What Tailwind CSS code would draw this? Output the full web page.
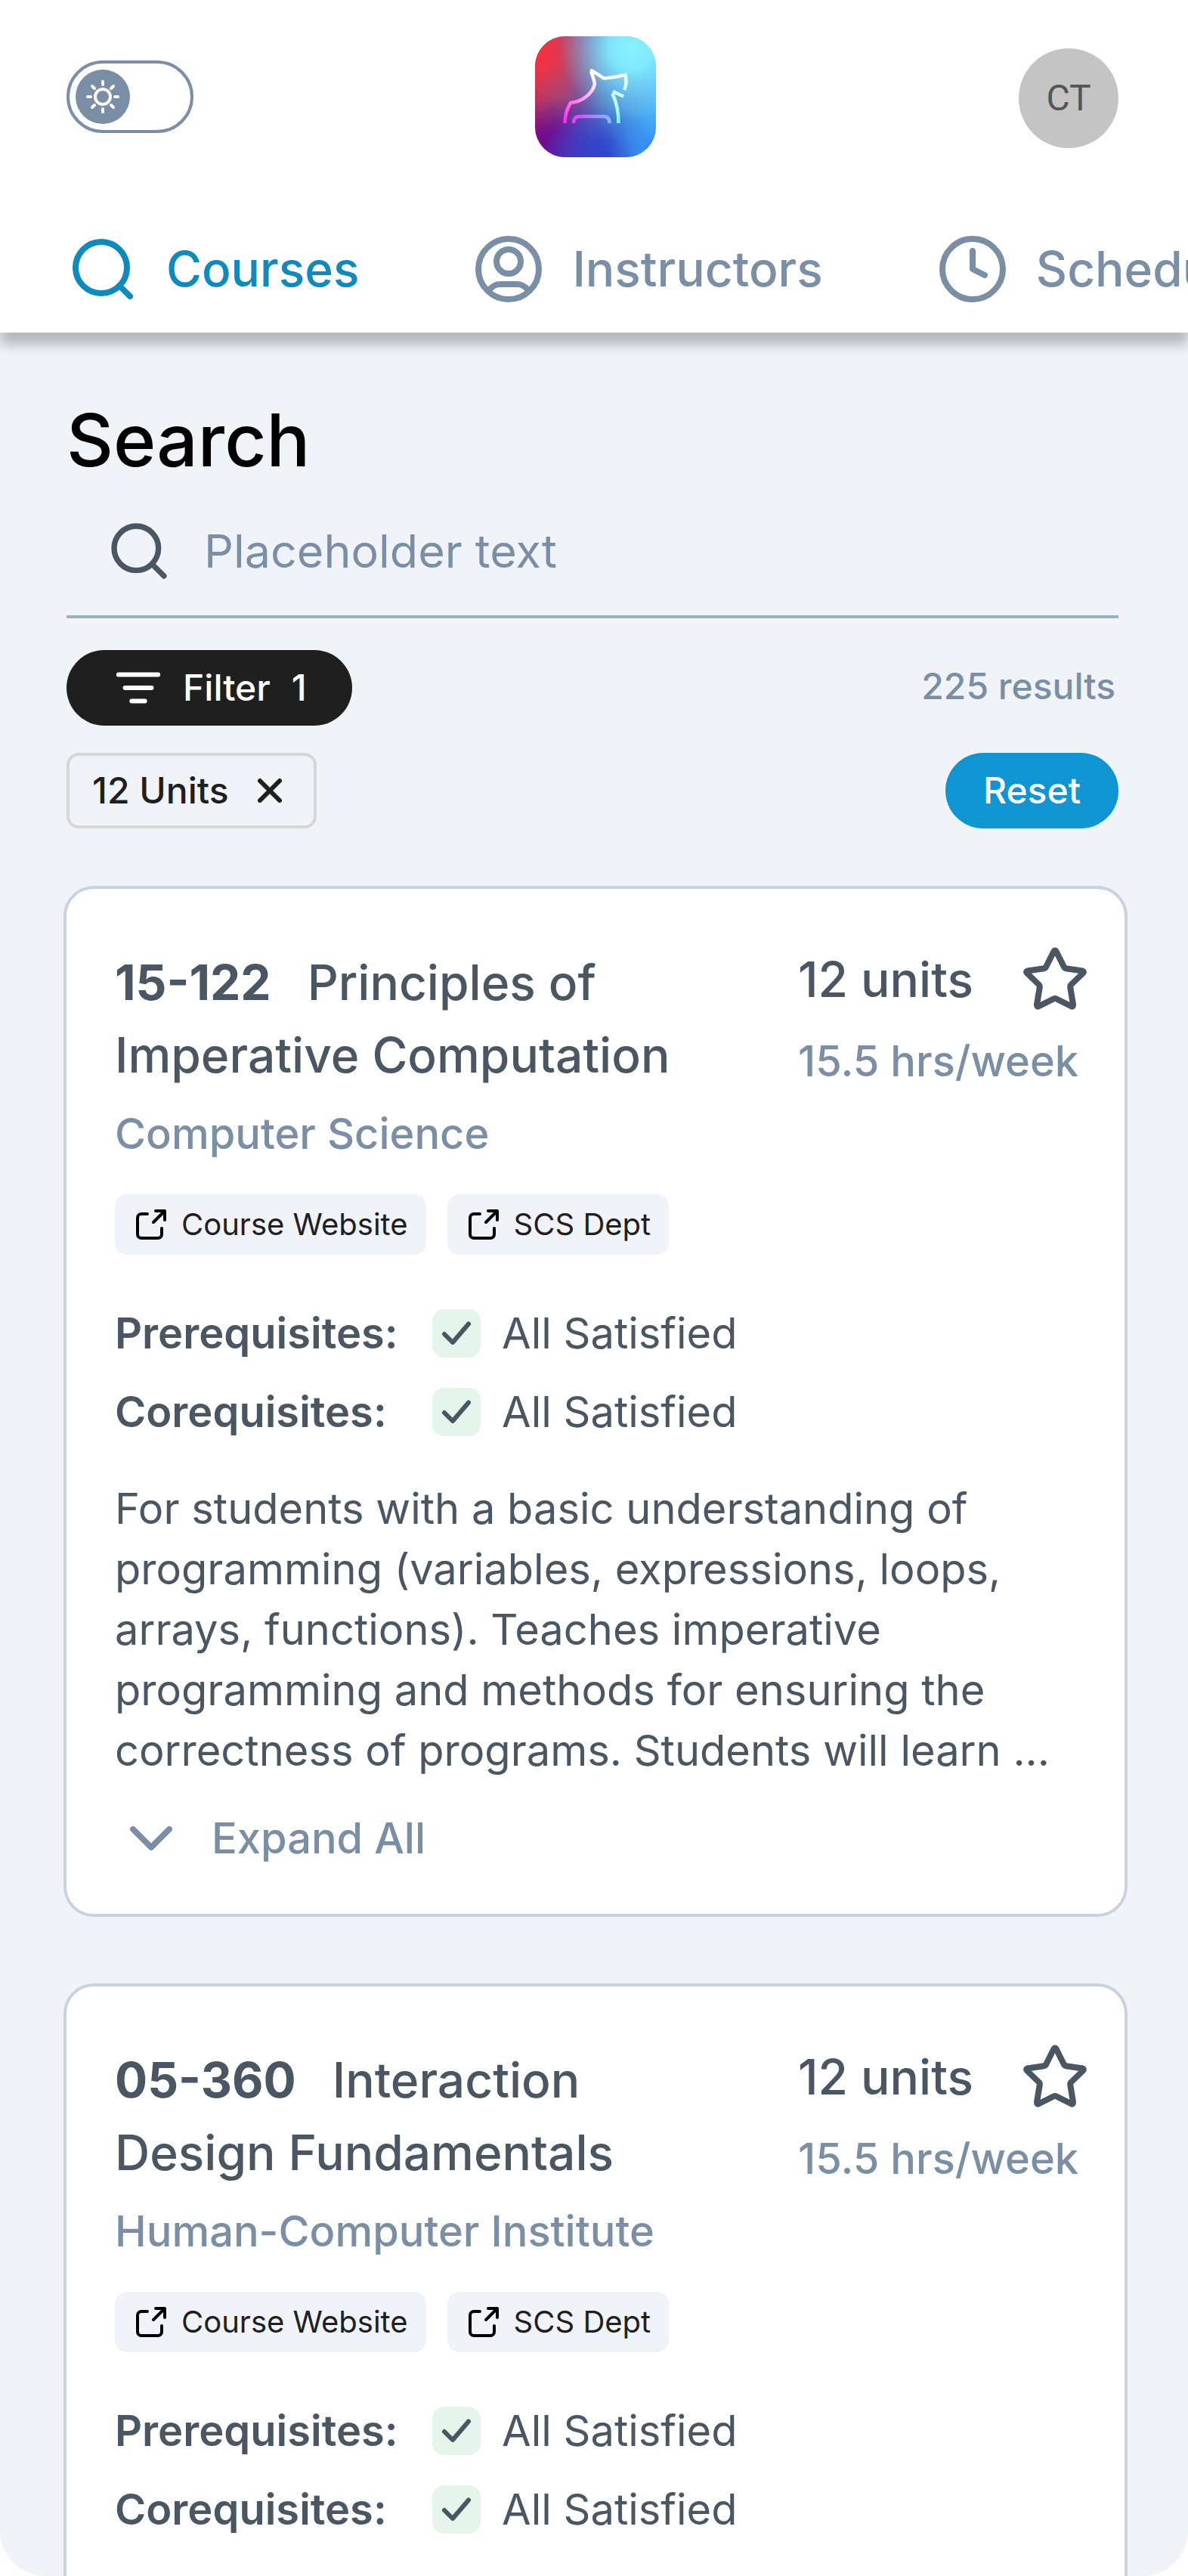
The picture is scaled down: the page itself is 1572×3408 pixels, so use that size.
<!DOCTYPE html>
<html lang="en">
<head>
    <meta charset="UTF-8">
    <meta name="viewport" content="width=device-width, initial-scale=1.0">
    <title>Courses</title>
    <script src="https://cdn.jsdelivr.net/npm/@tailwindcss/browser@4"></script>
</head>
<body class="bg-white font-['Inter',sans-serif] text-[#4a5662]">
    <div class="h-screen flex flex-col overflow-hidden rounded-b-[60px] bg-[#f0f3f8]">
        <header class="relative shrink-0 bg-white shadow-[0_16px_16px_rgba(0,0,0,0.25)]">
            <div class="grid grid-cols-3 items-center pl-[88px] pr-[84px] pt-12">
                <label class="relative w-[168px] h-24 p-2 rounded-full border-4 border-[#7a8fa6] cursor-pointer">
                    <input type="checkbox" aria-label="Dark mode" class="peer sr-only">
                    <span class="flex w-[72px] h-[72px] items-center justify-center rounded-full bg-[#7a8fa6] peer-checked:ml-auto">
                        <svg class="w-12 h-12" viewBox="0 0 48 48" fill="none" stroke="white" stroke-width="4" stroke-linecap="round">
                            <circle cx="24" cy="24" r="10"/>
                            <path d="M24 4v4M24 40v4M4 24h4M40 24h4M10 10l3 3M35 35l3 3M10 38l3-3M35 13l3-3"/>
                        </svg>
                    </span>
                </label>
                <a href="#" aria-label="Home" class="justify-self-center">
                    <svg class="w-40 h-40 rounded-[40px]" viewBox="0 0 160 160" fill="none">
                        <defs>
                            <linearGradient id="base" x1="0" y1="0" x2="1" y2="0">
                                <stop offset="0" stop-color="#b4104c"/>
                                <stop offset=".35" stop-color="#6c4a9c"/>
                                <stop offset=".65" stop-color="#4a8cd2"/>
                                <stop offset="1" stop-color="#50b8fc"/>
                            </linearGradient>
                            <radialGradient id="red" cx="0" cy=".14" r=".65">
                                <stop offset="0" stop-color="#ff2f3a"/>
                                <stop offset=".3" stop-color="#e63a4c" stop-opacity=".9"/>
                                <stop offset="1" stop-color="#a07090" stop-opacity="0"/>
                            </radialGradient>
                            <radialGradient id="cyan" cx=".8" cy=".1" r=".6">
                                <stop offset="0" stop-color="#86f2ff"/>
                                <stop offset=".3" stop-color="#86f0ff" stop-opacity=".9"/>
                                <stop offset="1" stop-color="#80c8f0" stop-opacity="0"/>
                            </radialGradient>
                            <radialGradient id="violet" cx=".2" cy="1" r=".5">
                                <stop offset="0" stop-color="#64089a"/>
                                <stop offset=".4" stop-color="#64089a" stop-opacity=".8"/>
                                <stop offset="1" stop-color="#5020a8" stop-opacity="0"/>
                            </radialGradient>
                            <radialGradient id="blue" cx=".55" cy="1.05" r=".5">
                                <stop offset="0" stop-color="#2c40cc"/>
                                <stop offset=".4" stop-color="#2c48d0" stop-opacity=".8"/>
                                <stop offset="1" stop-color="#3070e0" stop-opacity="0"/>
                            </radialGradient>
                            <radialGradient id="sky" cx="1" cy=".95" r=".4">
                                <stop offset="0" stop-color="#2f86f4"/>
                                <stop offset="1" stop-color="#3898f8" stop-opacity="0"/>
                            </radialGradient>
                            <linearGradient id="dog" gradientUnits="userSpaceOnUse" x1="40" y1="112" x2="86" y2="62">
                                <stop offset="0" stop-color="#ff2cf8"/>
                                <stop offset=".5" stop-color="#ff8cff"/>
                                <stop offset="1" stop-color="#ffffff"/>
                            </linearGradient>
                            <linearGradient id="face" gradientUnits="userSpaceOnUse" x1="94" y1="52" x2="112" y2="114">
                                <stop offset="0" stop-color="#ffffff"/>
                                <stop offset=".6" stop-color="#b4ffff"/>
                                <stop offset="1" stop-color="#80f4ff"/>
                            </linearGradient>
                            <linearGradient id="belly" gradientUnits="userSpaceOnUse" x1="50" y1="0" x2="100" y2="0">
                                <stop offset="0" stop-color="#e040ff"/>
                                <stop offset="1" stop-color="#84b8ff"/>
                            </linearGradient>
                        </defs>
                        <path fill="url(#base)" d="M0 0h160v160H0z"/>
                        <path fill="url(#red)" d="M0 0h160v160H0z"/>
                        <path fill="url(#violet)" d="M0 0h160v160H0z"/>
                        <path fill="url(#blue)" d="M0 0h160v160H0z"/>
                        <path fill="url(#sky)" d="M0 0h160v160H0z"/>
                        <path fill="url(#cyan)" d="M0 0h160v160H0z"/>
                        <g stroke-width="4.5">
                            <path stroke="url(#dog)" d="M39.500 115C39.500 105 42 96 47 88C62 87 76 76 79 63C78 57 76 52 74 46"/>
                            <path stroke="url(#face)" d="M73 46L75 45.500L91 55.500C101 55 110 53.500 119.500 51C121 58 121 65 118 71"/>
                            <path stroke="url(#face)" d="M117 79.500L105 74L103 77.500C108 88 110.500 101 110.500 115"/>
                            <path stroke="url(#belly)" d="M51 115C51 109 54 106 59 106H91C96 106 98.500 109 98.500 115"/>
                        </g>
                    </svg>
                </a>
                <button class="justify-self-end mt-1 mr-2 w-[132px] h-[132px] rounded-full bg-[#c4c4c4] font-['Roboto',sans-serif] text-5xl text-[#555555]">CT</button>
            </div>
            <nav class="flex gap-[150px] px-[88px] pt-[100px] pb-9 overflow-hidden whitespace-nowrap text-[64px] leading-[96px] font-medium text-[#7a8fa6]">
                <a href="#" class="flex shrink-0 items-center gap-9 text-[#0f8abf]">
                    <svg class="w-24 h-24" viewBox="0 0 24 24" fill="none" stroke="currentColor" stroke-width="2" stroke-linecap="round">
                        <circle cx="11.500" cy="11.500" r="8.500"/>
                        <path d="M17.500 17.500L21 21"/>
                    </svg>
                    Courses
                </a>
                <a href="#" class="flex shrink-0 items-center gap-9">
                    <svg class="w-24 h-24" viewBox="0 0 24 24" fill="none" stroke="currentColor" stroke-width="2">
                        <circle cx="12" cy="12" r="10"/>
                        <circle cx="12" cy="9.500" r="4"/>
                        <path d="M5.700 18.900C6.400 17.700 7.900 17 9.300 17h5.400c1.400 0 2.900.7 3.600 1.900"/>
                    </svg>
                    Instructors
                </a>
                <a href="#" class="flex shrink-0 items-center gap-9">
                    <svg class="w-24 h-24" viewBox="0 0 24 24" fill="none" stroke="currentColor" stroke-width="2" stroke-linecap="round" stroke-linejoin="round">
                        <circle cx="12" cy="12" r="10"/>
                        <path d="M12 6v6l4 2"/>
                    </svg>
                    Schedules
                </a>
            </nav>
        </header>

        <main class="flex-1 min-h-0 pl-[84px] pr-20 pt-20">
            <section class="pl-1 pr-3">
                <h1><label for="search" class="block text-8xl leading-[124px] font-medium text-black">Search</label></h1>
                <div class="flex items-center gap-[42px] h-[174px] px-[52px] border-b-4 border-[#9bafc2]">
                    <svg class="w-22 h-22 shrink-0" viewBox="0 0 24 24" fill="none" stroke="currentColor" stroke-width="2" stroke-linecap="round">
                        <circle cx="11" cy="11" r="8"/>
                        <path d="M16.700 16.700L21 21"/>
                    </svg>
                    <input id="search" type="text" placeholder="Placeholder text" class="flex-1 min-w-0 bg-transparent text-[61px] leading-[76px] outline-none placeholder:text-[#7a8fa6]">
                </div>
                <div class="mt-[42px] flex items-center justify-between">
                    <button class="flex items-center h-[100px] px-[60px] gap-6 rounded-full bg-[#1f1f1f] text-5xl font-medium text-white">
                        <svg class="w-[70px] h-[70px]" viewBox="0 0 24 24" fill="none" stroke="currentColor" stroke-width="2" stroke-linecap="round">
                            <path d="M3 6h18M6 12h12M9 18h6"/>
                        </svg>
                        <span class="flex gap-7"><span>Filter</span><span>1</span></span>
                    </button>
                    <p class="pr-1 pb-1 text-5xl font-medium text-[#7a8fa6]">225 results</p>
                </div>
                <div class="mt-9 flex items-center justify-between">
                    <button class="flex items-center gap-[26px] h-[100px] px-[30px] rounded-2xl border-4 border-[#d6d6d6] text-5xl font-medium text-[#1f1f1f]">
                        12 Units
                        <svg class="w-14 h-14" viewBox="0 0 56 56" fill="none" stroke="currentColor" stroke-width="6" stroke-linecap="round">
                            <path d="M15 15l26 26M41 15L15 41"/>
                        </svg>
                    </button>
                    <button class="h-[100px] px-[50px] rounded-full bg-[#0f95d1] text-5xl font-medium text-white">Reset</button>
                </div>
            </section>

            <section id="courses" class="mt-19 flex flex-col gap-22"></section>
        </main>
    </div>

    <template id="course">
        <article class="rounded-[40px] border-4 border-[#c8d3df] bg-white px-16 pt-[76px] pb-[52px]">
            <div class="flex justify-between">
                <div class="w-[800px]">
                    <h2 class="text-[64px] leading-[96px] font-medium"><span data-code class="mr-12 font-bold"></span><span data-title></span></h2>
                    <p data-dept class="mt-2 text-[56px] leading-[96px] font-medium text-[#7a8fa6]"></p>
                </div>
                <div class="w-[388px] -mr-5">
                    <div class="flex items-center justify-between">
                        <p data-units class="text-[64px] leading-[88px] font-medium"></p>
                        <button aria-label="Bookmark">
                            <svg class="w-24 h-22" viewBox="0 6 96 88" fill="none" stroke="currentColor" stroke-width="8" stroke-linejoin="round">
                                <path d="M48 11.500Q49 11.500 50 13.500L60 33.500Q61 35 62.500 35.200L84.500 38.500Q87 39.500 85 41.500L69 57Q68 58.500 68.200 60L72 83Q72.200 86.500 69.500 85.300L50 75.500Q48 74.500 46 75.500L26.500 85.300Q23.800 86.500 24 83L27.800 60Q28 58.500 27 57L11 41.500Q9 39.500 11.500 38.500L33.500 35.200Q35 35 36 33.500L46 13.500Q47 11.500 48 11.500Z"/>
                            </svg>
                        </button>
                    </div>
                    <p data-hours class="mt-2 text-[56px] leading-[112px] font-medium text-[#7a8fa6]"></p>
                </div>
            </div>
            <div class="mt-8 flex gap-7 text-[40px] text-[#1f1f1f]">
                <a href="#" class="flex items-center gap-4 h-20 px-6 rounded-2xl bg-[#f0f3f8]">
                    <svg class="w-12 h-12 text-black" viewBox="0 0 48 48" fill="none" stroke="currentColor" stroke-width="4" stroke-linecap="round" stroke-linejoin="round">
                        <path d="M19 10H11a5 5 0 0 0-5 5v22a5 5 0 0 0 5 5h22a5 5 0 0 0 5-5V29M27 21L42 6M30 6h12v12"/>
                    </svg>
                    Course Website
                </a>
                <a href="#" class="flex items-center gap-4 h-20 px-6 rounded-2xl bg-[#f0f3f8]">
                    <svg class="w-12 h-12 text-black" viewBox="0 0 48 48" fill="none" stroke="currentColor" stroke-width="4" stroke-linecap="round" stroke-linejoin="round">
                        <path d="M19 10H11a5 5 0 0 0-5 5v22a5 5 0 0 0 5 5h22a5 5 0 0 0 5-5V29M27 21L42 6M30 6h12v12"/>
                    </svg>
                    SCS Dept
                </a>
            </div>
            <dl class="mt-[72px] grid grid-cols-[392px_1fr] gap-x-7 gap-y-10 text-[56px] leading-[64px]">
                <dt class="font-semibold">Prerequisites:</dt>
                <dd class="flex items-center gap-7">
                    <svg class="w-16 h-16 rounded-2xl bg-[#e5f5ec]" viewBox="0 0 64 64" fill="none" stroke="currentColor" stroke-width="6" stroke-linecap="round" stroke-linejoin="round">
                        <path d="M16 33l11 11L48 19.500"/>
                    </svg>
                    All Satisfied
                </dd>
                <dt class="font-semibold">Corequisites:</dt>
                <dd class="flex items-center gap-7">
                    <svg class="w-16 h-16 rounded-2xl bg-[#e5f5ec]" viewBox="0 0 64 64" fill="none" stroke="currentColor" stroke-width="6" stroke-linecap="round" stroke-linejoin="round">
                        <path d="M16 33l11 11L48 19.500"/>
                    </svg>
                    All Satisfied
                </dd>
            </dl>
            <p class="mt-14 text-[56px] leading-[80px]">For students with a basic understanding of programming (variables, expressions, loops, arrays, functions). Teaches imperative programming and methods for ensuring the correctness of programs. Students will learn ...</p>
            <button class="mt-7 flex items-center gap-8 text-[56px] font-medium text-[#7a8fa6]">
                <svg class="w-24 h-24" viewBox="0 0 24 24" fill="none" stroke="currentColor" stroke-width="2" stroke-linecap="round" stroke-linejoin="round">
                    <path d="M6 9l6 6 6-6"/>
                </svg>
                Expand All
            </button>
        </article>
    </template>

    <script>
        const courses = [
            { code: '15-122', title: 'Principles of Imperative Computation', dept: 'Computer Science', units: '12 units', hours: '15.5 hrs/week' },
            { code: '05-360', title: 'Interaction Design Fundamentals', dept: 'Human-Computer Institute', units: '12 units', hours: '15.5 hrs/week' },
        ];

        const list = document.getElementById('courses');
        const template = document.getElementById('course');

        courses.forEach((course) => {
            const card = template.content.cloneNode(true);
            for (const key in course) {
                card.querySelector(`[data-${key}]`).textContent = course[key];
            }
            list.appendChild(card);
        });
    </script>
</body>
</html>
